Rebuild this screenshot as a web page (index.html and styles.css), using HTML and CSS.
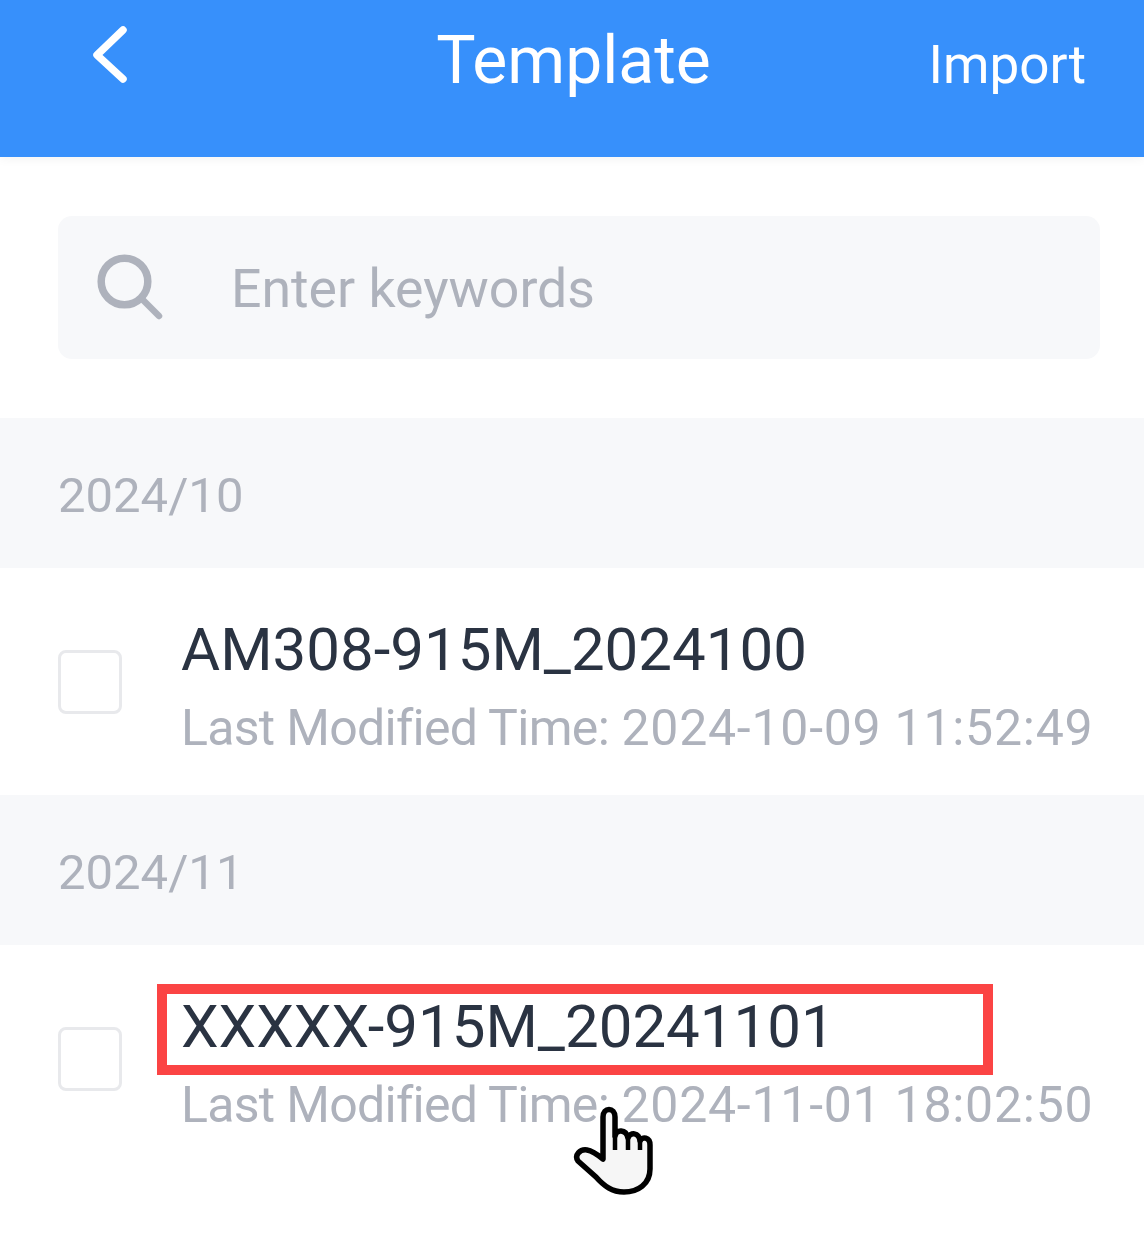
FILE: index.html
```html
<!DOCTYPE html>
<html lang="en">
<head>
    <meta charset="UTF-8">
    <title>Template</title>
    <link rel="stylesheet" href="styles.css">
</head>
<body>
    <header class="topbar">
        <svg class="back" width="36" height="60" viewBox="0 0 36 60">
            <path d="M31 6 L5 31 L31 55" fill="none" stroke="#fff" stroke-width="7.5" stroke-linecap="round" stroke-linejoin="round"/>
        </svg>
        <h1 class="title">Template</h1>
        <span class="import">Import</span>
    </header>

    <div class="search-wrap">
        <div class="search">
            <svg class="search-icon" width="68" height="72" viewBox="0 0 68 72">
                <circle cx="28.5" cy="29.5" r="23.3" fill="none" stroke="#aeb2bc" stroke-width="7.5"/>
                <path d="M46 47 L63 64" fill="none" stroke="#aeb2bc" stroke-width="6.5" stroke-linecap="round"/>
            </svg>
            <span class="placeholder">Enter keywords</span>
        </div>
    </div>

    <div class="group">2024/10</div>
    <div class="row">
        <span class="check"></span>
        <div class="row-text">
            <div class="name">AM308-915M_2024100</div>
            <div class="time"><span class="time-label">Last Modified Time:</span> <span class="time-value">2024-10-09 11:52:49</span></div>
        </div>
    </div>

    <div class="group">2024/11</div>
    <div class="row">
        <span class="check"></span>
        <div class="row-text">
            <div class="name">XXXXX-915M_20241101</div>
            <div class="time"><span class="time-label">Last Modified Time:</span> <span class="time-value">2024-11-01 18:02:50</span></div>
        </div>
        <div class="highlight"></div>
        <svg class="cursor" width="84" height="94" viewBox="0 0 84 94">
            <path d="M31 50 L31 12 C31 2 43 2 43 12 L43 31 C44 24 54 24 56 33 C58 27 67 27 68 36 C70 31 78 32 78 40 L78 64 C78 79 66 87 52 87 C40 87 32 81 24 72 L6 56 C2 50 8 44 15 45 C21 46 26 50 31 54 Z" fill="#f6f6f6" stroke="#000" stroke-width="5.5" stroke-linejoin="round"/>
            <path d="M43 31 L43 45 M56 33 L56 45 M68 36 L68 45" fill="none" stroke="#000" stroke-width="4.5"/>
        </svg>
    </div>
</body>
</html>
```

FILE: styles.css
```css
body {
    margin: 0;
    background-color: #fff;
    font-family: "Roboto", "Liberation Sans", sans-serif;
    height: 1238px;
    overflow: hidden;
}

.topbar {
    height: 157px;
    background-color: #3790fb;
    box-shadow: 0 2px 10px rgba(0, 0, 0, 0.05);
    display: flex;
    justify-content: space-between;
    color: #fff;
    padding: 0 58px 0 92px;
    position: relative;
}

.back {
    margin-top: 24px;
}

.title {
    margin: 21px 0 0 0;
    font-size: 66px;
    line-height: 80px;
    font-weight: 400;
    position: absolute;
    left: 3px;
    right: 0;
    text-align: center;
}

.import {
    font-size: 53px;
    line-height: 62px;
    margin-top: 34px;
}

.search-wrap {
    padding: 59px 44px 59px 58px;
}

.search {
    height: 143px;
    background-color: #f7f8fa;
    border-radius: 14px;
    display: flex;
    align-items: center;
    padding-left: 38px;
}

.search-icon {
    margin-right: 67px;
}

.placeholder {
    font-size: 53.6px;
    color: #aeb2bc;
    padding-top: 2px;
}

.group {
    height: 150px;
    background-color: #f7f8fa;
    color: #aeb2bc;
    font-size: 49px;
    line-height: 156px;
    padding-left: 58px;
}

.row {
    height: 227px;
    display: flex;
    align-items: center;
    padding-left: 58px;
    position: relative;
}

.row-text {
    margin-left: 59px;
    padding-top: 8px;
}

.check {
    width: 58px;
    height: 58px;
    border: 3px solid #e8e9ec;
    border-radius: 8px;
    flex-shrink: 0;
}

.name {
    font-size: 60px;
    line-height: 70px;
    color: #2a3342;
}

.time {
    font-size: 50px;
    line-height: 58px;
    margin-top: 14px;
    color: #aeb2bc;
}

.time-label {
    letter-spacing: -0.7px;
}

.time-value {
    letter-spacing: 0.75px;
}

.highlight {
    position: absolute;
    left: 157px;
    top: 39px;
    width: 816px;
    height: 71px;
    border: 10px solid #fb4444;
}

.cursor {
    position: absolute;
    left: 572px;
    top: 160px;
}
```
